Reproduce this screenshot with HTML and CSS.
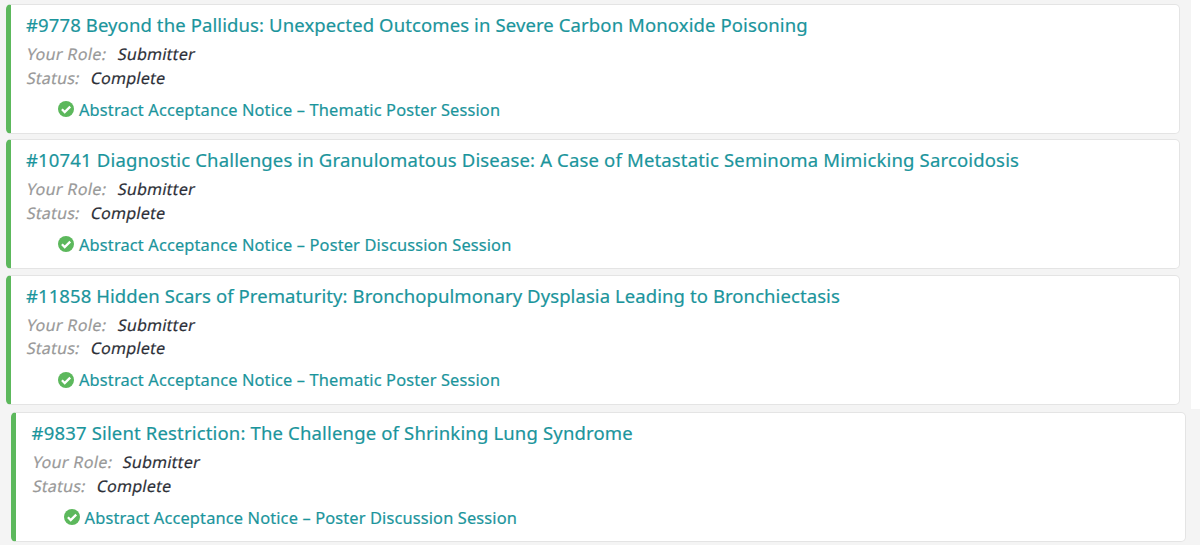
FILE: index.html
```html
<!DOCTYPE html>
<html lang="en">
<head>
    <meta charset="UTF-8">
    <title>My Submissions</title>
    <link rel="stylesheet" href="styles.css">
</head>
<body>
    <svg width="0" height="0" class="defs">
        <symbol id="check" viewBox="0 0 16 16">
            <circle cx="8" cy="8" r="8" fill="#5cb85c"/>
            <path d="M3.9 8.3l2.8 2.8 5.5-5.5" fill="none" stroke="#fff" stroke-width="2.3"/>
        </symbol>
    </svg>
    <div class="list">
        <div class="card">
            <a class="title">#9778 Beyond the Pallidus: Unexpected Outcomes in Severe Carbon Monoxide Poisoning</a>
            <div class="row"><span class="label role">Your Role:</span><span class="value">Submitter</span></div>
            <div class="row"><span class="label">Status:</span><span class="value">Complete</span></div>
            <div class="notice"><svg class="icon"><use href="#check"/></svg><a>Abstract Acceptance Notice – Thematic Poster Session</a></div>
        </div>
        <div class="card">
            <a class="title wide">#10741 Diagnostic Challenges in Granulomatous Disease: A Case of Metastatic Seminoma Mimicking Sarcoidosis</a>
            <div class="row"><span class="label role">Your Role:</span><span class="value">Submitter</span></div>
            <div class="row"><span class="label">Status:</span><span class="value">Complete</span></div>
            <div class="notice"><svg class="icon"><use href="#check"/></svg><a>Abstract Acceptance Notice – Poster Discussion Session</a></div>
        </div>
        <div class="card">
            <a class="title narrow">#11858 Hidden Scars of Prematurity: Bronchopulmonary Dysplasia Leading to Bronchiectasis</a>
            <div class="row"><span class="label role">Your Role:</span><span class="value">Submitter</span></div>
            <div class="row"><span class="label">Status:</span><span class="value">Complete</span></div>
            <div class="notice"><svg class="icon"><use href="#check"/></svg><a>Abstract Acceptance Notice – Thematic Poster Session</a></div>
        </div>
    </div>
    <div class="list last">
        <div class="card">
            <a class="title wide">#9837 Silent Restriction: The Challenge of Shrinking Lung Syndrome</a>
            <div class="row"><span class="label role">Your Role:</span><span class="value">Submitter</span></div>
            <div class="row"><span class="label">Status:</span><span class="value">Complete</span></div>
            <div class="notice"><svg class="icon"><use href="#check"/></svg><a>Abstract Acceptance Notice – Poster Discussion Session</a></div>
        </div>
    </div>
</body>
</html>
```
FILE: styles.css
```css
body {
    margin: 0;
    height: 545px;
    overflow: hidden;
    background: #fff;
    font-family: "Noto Sans", "Open Sans", sans-serif;
    font-size: 16px;
    -webkit-text-stroke: 0.2px;
}
.defs {
    display: block;
}
.list {
    display: flex;
    flex-direction: column;
    gap: 5.4px;
    box-sizing: border-box;
    width: 1191px;
    height: 409px;
    padding: 4px 11px 0 6px;
    background: #f4f4f4;
}
.list.last {
    width: 1200px;
    height: 136px;
    padding: 3px 14px 0 11px;
}
.card {
    box-sizing: border-box;
    height: 130px;
    padding: 6px 0 0 15px;
    background: #fff;
    border: 1px solid #e4e4e4;
    border-left: 5px solid #5cb85c;
    border-radius: 5px;
    white-space: nowrap;
}
.last .card {
    padding-left: 15.6px;
}
.title {
    display: block;
    height: 32px;
    line-height: 28px;
    font-size: 18.5px;
    letter-spacing: 0.11px;
    color: #1b959c;
}
.title.wide {
    letter-spacing: 0.16px;
}
.title.narrow {
    letter-spacing: 0.08px;
}
.row {
    display: flex;
    gap: 11px;
    height: 23.5px;
    line-height: 23.5px;
    margin-left: 1px;
    letter-spacing: 0.25px;
}
/* slanted roman, the real italic is too narrow */
.label,
.value {
    transform: skewX(-11deg);
}
.label {
    color: #999;
}
.label.role {
    letter-spacing: 0.4px;
}
.value {
    color: #2d3038;
}
.notice {
    display: flex;
    align-items: center;
    gap: 5px;
    height: 24px;
    margin: 7px 0 0 32px;
    font-size: 16.4px;
    letter-spacing: 0.14px;
    color: #1b959c;
}
.icon {
    width: 16px;
    height: 16px;
}
```
